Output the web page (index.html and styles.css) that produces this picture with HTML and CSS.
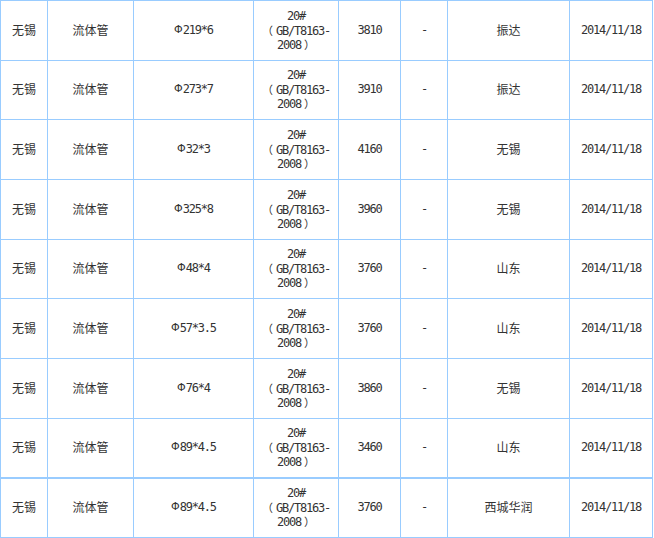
FILE: index.html
```html
<!DOCTYPE html>
<html>
<head>
<meta charset="utf-8">
<link rel="stylesheet" href="styles.css">
</head>
<body>
<div class="grid main">
  <div class="c cn">无锡</div><div class="c cn">流体管</div><div class="c num"><span class="phi">Φ</span>219*6</div><div class="c num std"><div class="ln">20#</div><div class="ln"><span class="fw op">（</span>GB/T8163-</div><div class="ln">2008<span class="fw cl">）</span></div></div><div class="c num">3810</div><div class="c num">-</div><div class="c cn">振达</div><div class="c num">2014/11/18</div>
  <div class="c cn">无锡</div><div class="c cn">流体管</div><div class="c num"><span class="phi">Φ</span>273*7</div><div class="c num std"><div class="ln">20#</div><div class="ln"><span class="fw op">（</span>GB/T8163-</div><div class="ln">2008<span class="fw cl">）</span></div></div><div class="c num">3910</div><div class="c num">-</div><div class="c cn">振达</div><div class="c num">2014/11/18</div>
  <div class="c cn">无锡</div><div class="c cn">流体管</div><div class="c num"><span class="phi">Φ</span>32*3</div><div class="c num std"><div class="ln">20#</div><div class="ln"><span class="fw op">（</span>GB/T8163-</div><div class="ln">2008<span class="fw cl">）</span></div></div><div class="c num">4160</div><div class="c num">-</div><div class="c cn">无锡</div><div class="c num">2014/11/18</div>
  <div class="c cn">无锡</div><div class="c cn">流体管</div><div class="c num"><span class="phi">Φ</span>325*8</div><div class="c num std"><div class="ln">20#</div><div class="ln"><span class="fw op">（</span>GB/T8163-</div><div class="ln">2008<span class="fw cl">）</span></div></div><div class="c num">3960</div><div class="c num">-</div><div class="c cn">无锡</div><div class="c num">2014/11/18</div>
  <div class="c cn">无锡</div><div class="c cn">流体管</div><div class="c num"><span class="phi">Φ</span>48*4</div><div class="c num std"><div class="ln">20#</div><div class="ln"><span class="fw op">（</span>GB/T8163-</div><div class="ln">2008<span class="fw cl">）</span></div></div><div class="c num">3760</div><div class="c num">-</div><div class="c cn">山东</div><div class="c num">2014/11/18</div>
  <div class="c cn">无锡</div><div class="c cn">流体管</div><div class="c num"><span class="phi">Φ</span>57*3.5</div><div class="c num std"><div class="ln">20#</div><div class="ln"><span class="fw op">（</span>GB/T8163-</div><div class="ln">2008<span class="fw cl">）</span></div></div><div class="c num">3760</div><div class="c num">-</div><div class="c cn">山东</div><div class="c num">2014/11/18</div>
  <div class="c cn">无锡</div><div class="c cn">流体管</div><div class="c num"><span class="phi">Φ</span>76*4</div><div class="c num std"><div class="ln">20#</div><div class="ln"><span class="fw op">（</span>GB/T8163-</div><div class="ln">2008<span class="fw cl">）</span></div></div><div class="c num">3860</div><div class="c num">-</div><div class="c cn">无锡</div><div class="c num">2014/11/18</div>
  <div class="c cn">无锡</div><div class="c cn">流体管</div><div class="c num"><span class="phi">Φ</span>89*4.5</div><div class="c num std"><div class="ln">20#</div><div class="ln"><span class="fw op">（</span>GB/T8163-</div><div class="ln">2008<span class="fw cl">）</span></div></div><div class="c num">3460</div><div class="c num">-</div><div class="c cn">山东</div><div class="c num">2014/11/18</div>
</div>
<div class="grid last">
  <div class="c cn">无锡</div><div class="c cn">流体管</div><div class="c num"><span class="phi">Φ</span>89*4.5</div><div class="c num std"><div class="ln">20#</div><div class="ln"><span class="fw op">（</span>GB/T8163-</div><div class="ln">2008<span class="fw cl">）</span></div></div><div class="c num">3760</div><div class="c num">-</div><div class="c cn">西城华润</div><div class="c num">2014/11/18</div>
</div>
</body>
</html>
```

FILE: styles.css
```css
html, body {
  margin: 0;
  padding: 0;
  background: #ffffff;
}
.grid {
  display: grid;
  width: 653px;
  box-sizing: border-box;
  grid-template-columns: 46px 85px 119px 84px 61px 46px 121px 82px;
  gap: 1px;
  padding: 1px;
  background: #99ccff;
}
.main {
  grid-template-rows: 59px 58px 59px 59px 58px 59px 59px 58px;
}
.last {
  grid-template-rows: 58px;
}
.c {
  background: #ffffff;
  display: flex;
  align-items: center;
  justify-content: center;
  text-align: center;
  color: #333333;
  font-size: 12px;
  line-height: 16px;
  white-space: nowrap;
  padding-bottom: 2px;
}
.cn {
  font-family: "Noto Sans CJK SC", sans-serif;
}
.num {
  font-family: "DejaVu Sans Mono", "Noto Sans CJK SC", monospace;
  letter-spacing: -1.2px;
}
.std {
  flex-direction: column;
}
.ln {
  height: 14px;
  line-height: 14px;
}
.fw {
  font-family: "Noto Sans CJK SC", sans-serif;
  letter-spacing: 0;
  font-size: 11px;
}
.op {
  margin-right: 3px;
}
.cl {
  margin-left: 3px;
}
.phi {
  font-family: "DejaVu Sans", sans-serif;
  letter-spacing: 0;
  font-size: 11px;
}
```
